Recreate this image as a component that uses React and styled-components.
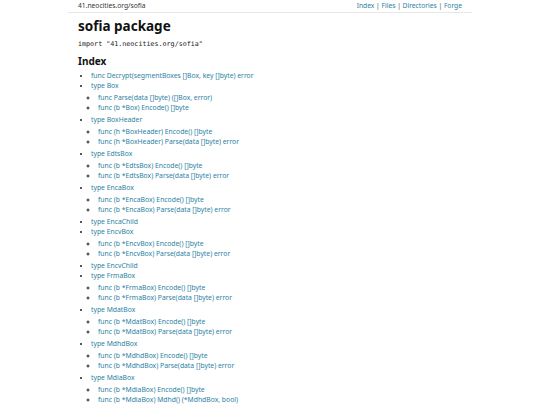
import React from 'react';
import styled, { createGlobalStyle } from 'styled-components';

const GlobalStyle = createGlobalStyle`
  body {
    margin: 0;
    background: #fff;
    font-family: "Noto Sans", sans-serif;
    color: #222;
  }
`;

const Page = styled.div`
  width: 404px;
  margin: 0 auto;
`;

const TopBar = styled.header`
  display: flex;
  justify-content: space-between;
  align-items: center;
  padding: 1px 10px 1px;
  border-bottom: 1px solid #e8e8e8;
  font-size: 6.7px;
  line-height: 10px;
`;

const Site = styled.span`
  color: #333;
`;

const Nav = styled.nav`
  color: #555;
  a {
    color: #2b7fa3;
    text-decoration: none;
  }
`;

const Main = styled.main`
  padding: 0 10px;
`;

const Title = styled.h1`
  margin: 4px 0 4px;
  font-size: 13.5px;
  line-height: 18px;
  font-weight: 700;
  color: #111;
`;

const ImportLine = styled.code`
  display: block;
  font-family: "DejaVu Sans Mono", monospace;
  font-size: 6.7px;
  line-height: 10px;
  color: #222;
`;

const SectionTitle = styled.h2`
  margin: 5px 0 3px;
  font-size: 10px;
  line-height: 14px;
  font-weight: 700;
  color: #111;
`;

const List = styled.ul`
  margin: ${(p) => (p.$nested ? '2px 0' : '0')};
  padding-left: ${(p) => (p.$nested ? '7px' : '13px')};
  list-style: ${(p) => (p.$nested ? 'circle' : 'disc')};
  font-size: 6.8px;
  line-height: 10px;
`;

const Item = styled.li`
  a {
    color: #2b7fa3;
    text-decoration: none;
  }
`;

const index = [
  { t: 'func Decrypt(segmentBoxes []Box, key []byte) error' },
  { t: 'type Box', c: ['func Parse(data []byte) ([]Box, error)', 'func (b *Box) Encode() []byte'] },
  { t: 'type BoxHeader', c: ['func (h *BoxHeader) Encode() []byte', 'func (h *BoxHeader) Parse(data []byte) error'] },
  { t: 'type EdtsBox', c: ['func (b *EdtsBox) Encode() []byte', 'func (b *EdtsBox) Parse(data []byte) error'] },
  { t: 'type EncaBox', c: ['func (b *EncaBox) Encode() []byte', 'func (b *EncaBox) Parse(data []byte) error'] },
  { t: 'type EncaChild' },
  { t: 'type EncvBox', c: ['func (b *EncvBox) Encode() []byte', 'func (b *EncvBox) Parse(data []byte) error'] },
  { t: 'type EncvChild' },
  { t: 'type FrmaBox', c: ['func (b *FrmaBox) Encode() []byte', 'func (b *FrmaBox) Parse(data []byte) error'] },
  { t: 'type MdatBox', c: ['func (b *MdatBox) Encode() []byte', 'func (b *MdatBox) Parse(data []byte) error'] },
  { t: 'type MdhdBox', c: ['func (b *MdhdBox) Encode() []byte', 'func (b *MdhdBox) Parse(data []byte) error'] },
  { t: 'type MdiaBox', c: ['func (b *MdiaBox) Encode() []byte', 'func (b *MdiaBox) Mdhd() (*MdhdBox, bool)', 'func (b *MdiaBox) Parse(data []byte) error'] },
  { t: 'type MinfBox', c: ['func (b *MinfBox) Encode() []byte', 'func (b *MinfBox) Parse(data []byte) error'] },
];

export default function App() {
  return (
    <>
      <GlobalStyle />
      <Page>
        <TopBar>
          <Site>41.neocities.org/sofia</Site>
          <Nav>
            <a href="#">Index</a> | <a href="#">Files</a> | <a href="#">Directories</a> | <a href="#">Forge</a>
          </Nav>
        </TopBar>
        <Main>
          <Title>sofia package</Title>
          <ImportLine>import "41.neocities.org/sofia"</ImportLine>
          <SectionTitle>Index</SectionTitle>
          <List>
            {index.map((e) => (
              <Item key={e.t}>
                <a href="#">{e.t}</a>
                {e.c && (
                  <List $nested>
                    {e.c.map((c) => (
                      <Item key={c}>
                        <a href="#">{c}</a>
                      </Item>
                    ))}
                  </List>
                )}
              </Item>
            ))}
          </List>
        </Main>
      </Page>
    </>
  );
}
